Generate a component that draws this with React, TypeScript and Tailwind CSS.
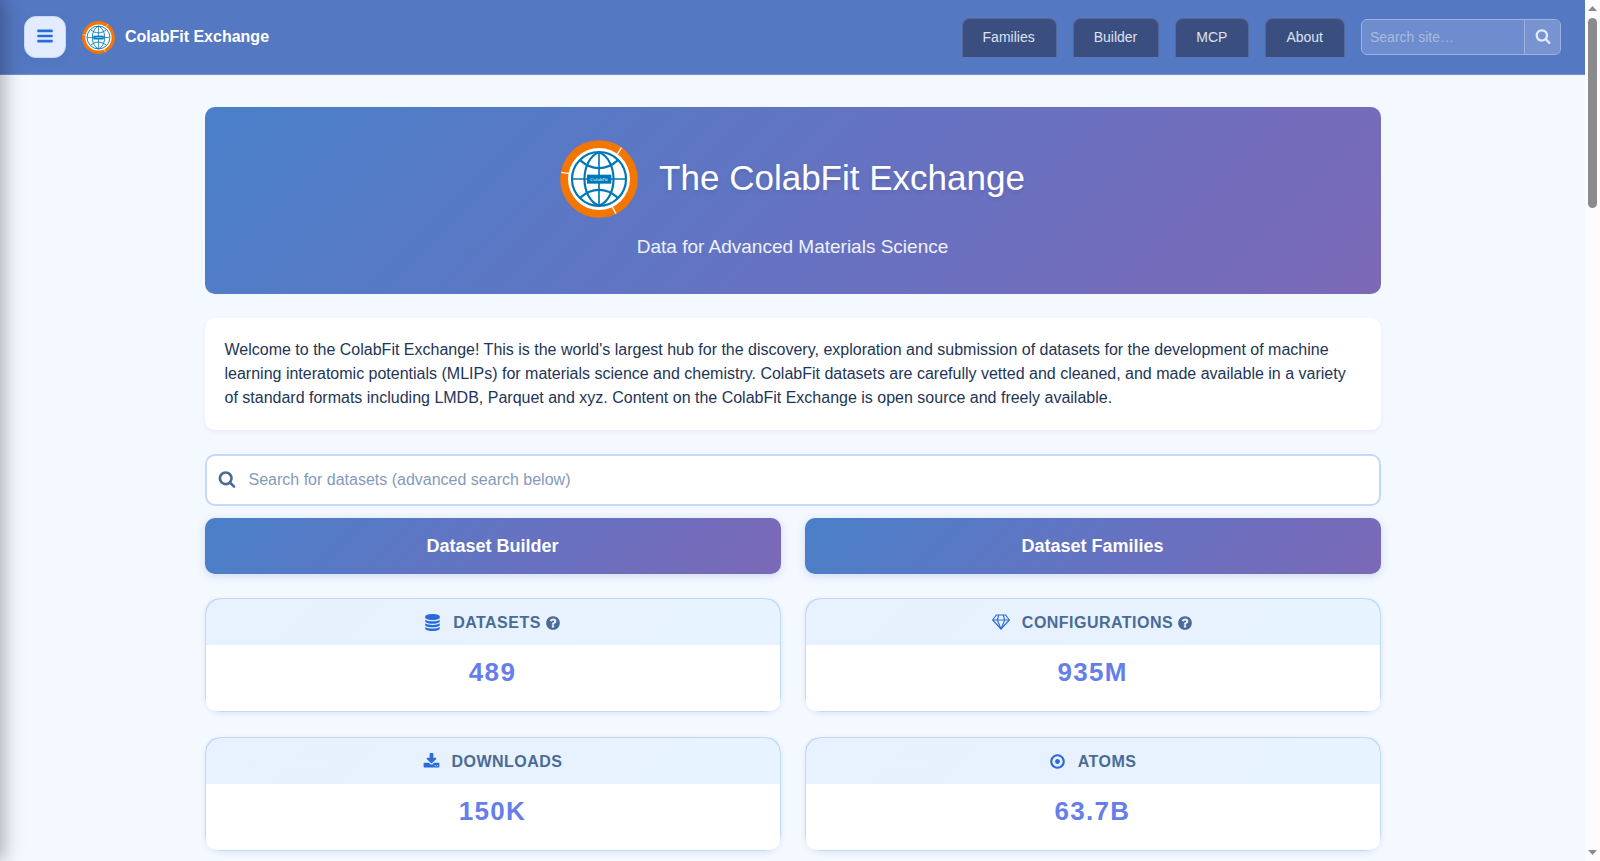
import type React from "react"

const ICON_PATHS = {
  bars: "M1664 1344v128q0 26-19 45t-45 19h-1408q-26 0-45-19t-19-45v-128q0-26 19-45t45-19h1408q26 0 45 19t19 45zm0-512v128q0 26-19 45t-45 19h-1408q-26 0-45-19t-19-45v-128q0-26 19-45t45-19h1408q26 0 45 19t19 45zm0-512v128q0 26-19 45t-45 19h-1408q-26 0-45-19t-19-45v-128q0-26 19-45t45-19h1408q26 0 45 19t19 45z",
  search:
    "M1216 832q0-185-131.5-316.5t-316.5-131.5-316.5 131.5-131.5 316.5 131.5 316.5 316.5 131.5 316.5-131.5 131.5-316.5zm512 832q0 52-38 90t-90 38q-54 0-90-38l-343-342q-179 124-399 124-143 0-273.5-55.5t-225-150-150-225-55.5-273.5 55.5-273.5 150-225 225-150 273.5-55.5 273.5 55.5 225 150 150 225 55.5 273.5q0 220-124 399l343 343q37 37 37 90z",
  database:
    "M896 768q237 0 443-43t325-127v170q0 69-103 128t-280 93.5-385 34.5-385-34.5-280-93.5-103-128v-170q119 84 325 127t443 43zm0 768q237 0 443-43t325-127v170q0 69-103 128t-280 93.5-385 34.5-385-34.5-280-93.5-103-128v-170q119 84 325 127t443 43zm0-384q237 0 443-43t325-127v170q0 69-103 128t-280 93.5-385 34.5-385-34.5-280-93.5-103-128v-170q119 84 325 127t443 43zm0-1152q208 0 385 34.5t280 93.5 103 128v128q0 69-103 128t-280 93.5-385 34.5-385-34.5-280-93.5-103-128v-128q0-69 103-128t280-93.5 385-34.5z",
  download:
    "M1344 1344q0-26-19-45t-45-19-45 19-19 45 19 45 45 19 45-19 19-45zm256 0q0-26-19-45t-45-19-45 19-19 45 19 45 45 19 45-19 19-45zm128-224v320q0 40-28 68t-68 28h-1472q-40 0-68-28t-28-68v-320q0-40 28-68t68-28h465l135 136q58 56 136 56t136-56l136-136h464q40 0 68 28t28 68zm-325-569q17 41-14 70l-448 448q-18 19-45 19t-45-19l-448-448q-31-29-14-70 17-39 59-39h256v-448q0-26 19-45t45-19h256q26 0 45 19t19 45v448h256q42 0 59 39z",
  question:
    "M1024 1376v-192q0-14-9-23t-23-9h-192q-14 0-23 9t-9 23v192q0 14 9 23t23 9h192q14 0 23-9t9-23zm256-672q0-88-55.5-163t-138.5-116-170-41q-243 0-371 213-15 24 8 42l132 100q7 6 19 6 16 0 25-12 53-68 86-92 34-24 86-24 48 0 85.5 26t37.5 59q0 38-20 61t-68 45q-63 28-115.5 86.5t-52.5 125.5v36q0 14 9 23t23 9h192q14 0 23-9t9-23q0-19 21.5-49.5t54.5-49.5q32-18 49-28.5t46-35 44.5-48 28-60.5 12.5-81zm384 192q0 209-103 385.5t-279.5 279.5-385.5 103-385.5-103-279.5-279.5-103-385.5 103-385.5 279.5-279.5 385.5-103 385.5 103 279.5 279.5 103 385.5z",
  dotCircle:
    "M1152 896q0 106-75 181t-181 75-181-75-75-181 75-181 181-75 181 75 75 181zm-256-544q-148 0-273 73t-198 198-73 273 73 273 198 198 273 73 273-73 198-198 73-273-73-273-198-198-273-73zm768 544q0 209-103 385.5t-279.5 279.5-385.5 103-385.5-103-279.5-279.5-103-385.5 103-385.5 279.5-279.5 385.5-103 385.5 103 279.5 279.5 103 385.5z",
}

interface IconProps {
  name: keyof typeof ICON_PATHS
  className: string
}

const Icon: React.FC<IconProps> = ({ name, className }) => (
  <svg viewBox="0 0 1792 1792" fill="currentColor" aria-hidden="true" className={className}>
    <path d={ICON_PATHS[name]} />
  </svg>
)

const DiamondIcon: React.FC<{ className: string }> = ({ className }) => (
  <svg
    viewBox="0 0 54 48"
    fill="none"
    stroke="currentColor"
    strokeWidth="3.4"
    strokeLinejoin="round"
    aria-hidden="true"
    className={className}
  >
    <path d="M13 3h28l11 15-25 27L2 18z" />
    <path d="M2 18h50M20 3l-4 15 11 27 11-27-4-15" />
  </svg>
)

const Logo: React.FC<{ className: string }> = ({ className }) => (
  <svg viewBox="0 0 234 234" role="img" aria-label="ColabFit logo" className={className}>
    <circle cx="117" cy="117" r="116.5" fill="#f37600" />
    <circle cx="117" cy="117" r="93" fill="#fff" />
    <g stroke="#fff" strokeWidth="4">
      <path d="M184 23l-12 20M4 97l24 4M156 199l12 22" />
    </g>
    <g fill="none" stroke="#0077b8" strokeWidth="6.5">
      <circle cx="117" cy="117" r="81" />
      <path d="M117 36v162M37 117h160" strokeWidth="5" />
      <path d="M117 37c-58 22-58 138 0 160M117 37c58 22 58 138 0 160" />
      <path d="M61 61c34 31 78 31 112 0M61 173c34-31 78-31 112 0" />
    </g>
    <rect x="81" y="104" width="73" height="27" fill="#0077b8" />
    <text x="117" y="122" textAnchor="middle" fontSize="15" fill="#fff" fontFamily="Liberation Serif, serif">
      ColabFit
    </text>
  </svg>
)

const navLinks = ["Families", "Builder", "MCP", "About"]

const Header: React.FC = () => (
  <header className="flex items-center justify-between border-b border-[#7090d0] bg-[#5578c2] px-6 py-4">
    <div className="flex items-center">
      <button
        type="button"
        aria-label="Toggle sidebar"
        className="flex size-[42px] items-center justify-center rounded-xl border border-[#c5d9f8] bg-[#e3ebfe] pb-0.5 text-[#2a6bdb] shadow-[0_2px_8px_rgba(59,100,200,0.15)]"
      >
        <Icon name="bars" className="size-[18px]" />
      </button>
      <a href="#home" className="ml-4 flex items-center gap-2.5 font-bold text-white">
        <Logo className="size-[33px]" />
        ColabFit Exchange
      </a>
    </div>

    <div className="flex items-center gap-4">
      <nav className="flex gap-4">
        {navLinks.map((label) => (
          <a
            key={label}
            href={`#${label.toLowerCase()}`}
            className="rounded-t-lg border border-b-0 border-[#54689b] bg-[#3a4f7f] pt-2 pr-[21px] pb-[9px] pl-5 text-sm leading-[21px] text-[#dde3f0]"
          >
            {label}
          </a>
        ))}
      </nav>
      <form role="search" className="flex h-9 w-[200px] overflow-hidden rounded-md border border-[#9cb1df] bg-[#6f8dce]">
        <input
          type="search"
          aria-label="Search site"
          placeholder="Search site…"
          className="min-w-0 flex-1 px-2 text-sm text-white outline-none placeholder:text-[#a6badf]"
        />
        <button
          type="button"
          aria-label="Search"
          className="flex w-9 items-center justify-center border-l border-[#9cb1df] bg-[#7893d0] pb-0.5 text-[#e3ebfe]"
        >
          <Icon name="search" className="size-4" />
        </button>
      </form>
    </div>
  </header>
)

const Hero: React.FC = () => (
  <section className="rounded-[10px] bg-[linear-gradient(135deg,#4a80c9_0%,#6a70c0_63%,#7b69b6_100%)] px-8 pt-[33px] pb-[33px] text-center text-white">
    <div className="flex items-center justify-center gap-[21px]">
      <Logo className="size-[78px]" />
      <h1 className="pb-0.5 text-[35px] leading-[42px] [text-shadow:0_2px_4px_rgba(0,0,0,0.1)]">
        The ColabFit Exchange
      </h1>
    </div>
    <p className="mt-3.5 text-[19px] leading-[29px] text-white/90">Data for Advanced Materials Science</p>
  </section>
)

const ActionLink: React.FC<{ href: string; children: React.ReactNode }> = ({ href, children }) => (
  <a
    href={href}
    className="flex h-14 items-center justify-center rounded-[10px] bg-[linear-gradient(135deg,#4a80c9_0%,#6a70c0_63%,#7b69b6_100%)] text-lg font-bold text-white shadow-[0_2px_8px_rgba(59,110,200,0.2)]"
  >
    {children}
  </a>
)

interface StatCardProps {
  icon: React.ReactNode
  label: string
  value: string
  help?: boolean
}

const StatCard: React.FC<StatCardProps> = ({ icon, label, value, help }) => (
  <article className="rounded-2xl border border-[#c0d9f6] bg-white shadow-[0_2px_5px_rgba(59,110,200,0.12)]">
    <h2 className="flex h-[46px] items-center justify-center rounded-t-[10px] bg-[linear-gradient(135deg,rgba(63,138,247,0.12),rgba(38,150,255,0.11))] pt-0.5 font-bold tracking-[0.03em] text-[#4a6b96] uppercase">
      <span className="mr-3 pb-0.5 text-[#2a6bdb]">{icon}</span>
      {label}
      {help && (
        <button type="button" aria-label={`About ${label}`} className="ml-1">
          <Icon name="question" className="size-4" />
        </button>
      )}
    </h2>
    <p className="rounded-b-[10px] bg-white pt-[11px] pb-[23px] text-center text-[26px] leading-8 font-bold tracking-wider text-[#667eea]">
      {value}
    </p>
  </article>
)

const Scrollbar: React.FC = () => (
  <div aria-hidden="true" className="flex w-[15px] shrink-0 flex-col items-center bg-[#fcfcfc] py-1.5">
    <svg viewBox="0 0 9 5" className="h-[5px] w-[9px]" fill="#8b8b8b">
      <path d="M4.5 0L9 5H0z" />
    </svg>
    <div className="mt-[7px] h-[190px] w-[9px] rounded-full bg-[#8b8b8b]" />
    <svg viewBox="0 0 9 5" className="mt-auto h-[5px] w-[9px]" fill="#8b8b8b">
      <path d="M4.5 5L9 0H0z" />
    </svg>
  </div>
)

export default function App() {
  return (
    <div className="flex h-screen overflow-hidden bg-[#f4f8ff] font-['Liberation_Sans',Arial,sans-serif] text-base">
      {/* Collapsed sidebar, only its shadow reaches into the page */}
      <aside className="pointer-events-none fixed inset-y-0 right-full z-10 w-64 shadow-[2px_0_20px_rgba(0,0,0,0.35)]" />

      <div className="min-w-0 flex-1">
        <Header />
        <main className="mx-auto max-w-[1200px] px-3 pt-8">
          <Hero />

          <p className="mt-6 rounded-[10px] bg-white p-5 leading-6 text-[#1e3557] shadow-[0_2px_4px_rgba(59,110,200,0.08)]">
            Welcome to the ColabFit Exchange! This is the world's largest hub for the discovery, exploration and
            submission of datasets for the development of machine learning interatomic potentials (MLIPs) for materials
            science and chemistry. ColabFit datasets are carefully vetted and cleaned, and made available in a variety of
            standard formats including LMDB, Parquet and xyz. Content on the ColabFit Exchange is open source and freely
            available.
          </p>

          <label className="mt-6 flex h-[52px] items-center rounded-[10px] border-2 border-[#c3d9f8] bg-white pl-[11px] text-[#4a6b96]">
            <Icon name="search" className="mb-0.5 size-[18px]" />
            <input
              type="search"
              aria-label="Search for datasets"
              placeholder="Search for datasets (advanced search below)"
              className="h-full flex-1 pl-[13px] text-[#1e3557] outline-none placeholder:text-[#839bbb]"
            />
          </label>

          <div className="mt-3 grid grid-cols-2 gap-6">
            <ActionLink href="#builder">Dataset Builder</ActionLink>
            <ActionLink href="#families">Dataset Families</ActionLink>
          </div>

          <div className="mt-6 grid grid-cols-2 gap-x-6 gap-y-[25px]">
            <StatCard icon={<Icon name="database" className="size-[17px]" />} label="Datasets" value="489" help />
            <StatCard icon={<DiamondIcon className="h-4 w-[18px]" />} label="Configurations" value="935M" help />
            <StatCard icon={<Icon name="download" className="size-[17px]" />} label="Downloads" value="150K" />
            <StatCard icon={<Icon name="dotCircle" className="size-[17px]" />} label="Atoms" value="63.7B" />
          </div>
        </main>
      </div>

      <Scrollbar />
    </div>
  )
}
